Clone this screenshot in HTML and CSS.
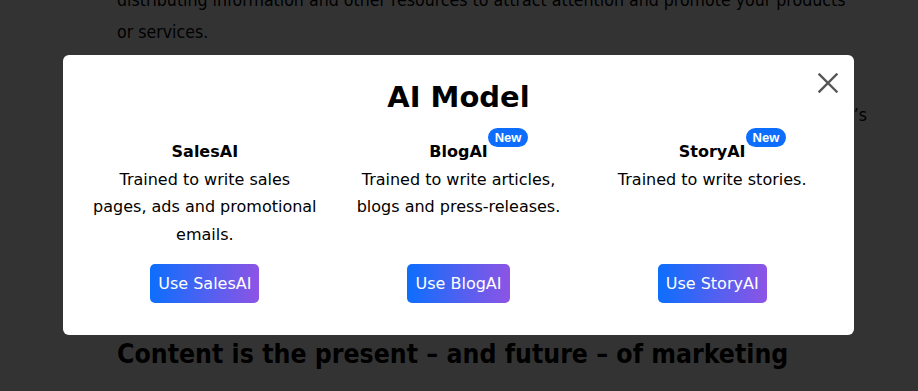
FILE: index.html
```html
<!DOCTYPE html>
<html lang="en">
<head>
<meta charset="utf-8">
<title>AI Model</title>
<link rel="stylesheet" href="styles.css">
</head>
<body>
<main class="article">
  <p class="para">distributing information and other resources to attract attention and promote your products<br>or services.</p>
  <p class="para">
    <span class="line">Good content helps brands build trust, grow an audience and generate leads.</span>
    <span class="line line-full">It is about delivering value at every stage of the buyer’s journey, and it shapes the company’s</span>
  </p>
  <p class="para">It answers real questions, educates prospects and keeps customers engaged<br>long after the first purchase. Consistent publishing builds authority over<br>time, improves search visibility and gives every channel something worth<br>sharing. That is why so many teams now treat content as a core part of<br>their growth strategy rather than an afterthought.</p>
  <h2 class="article-heading">Content is the present – and future – of marketing</h2>
</main>

<div class="backdrop"></div>

<section class="modal" role="dialog" aria-labelledby="modal-title">
  <button class="close" aria-label="Close">
    <svg viewBox="0 0 20 20" width="20" height="20"><path d="M1.5 1.5 L18.5 18.5 M18.5 1.5 L1.5 18.5" stroke="#555" stroke-width="2.4" stroke-linecap="square" fill="none"/></svg>
  </button>
  <h1 class="modal-title" id="modal-title">AI Model</h1>
  <div class="models">
    <div class="model">
      <h3 class="model-name">SalesAI</h3>
      <p class="model-desc">Trained to write sales pages, ads and promotional emails.</p>
      <button class="btn">Use SalesAI</button>
    </div>
    <div class="model">
      <h3 class="model-name">BlogAI<span class="badge">New</span></h3>
      <p class="model-desc">Trained to write articles, blogs and press-releases.</p>
      <button class="btn">Use BlogAI</button>
    </div>
    <div class="model">
      <h3 class="model-name">StoryAI<span class="badge">New</span></h3>
      <p class="model-desc">Trained to write stories.</p>
      <button class="btn">Use StoryAI</button>
    </div>
  </div>
</section>
</body>
</html>
```

FILE: styles.css
```css
html, body {
  margin: 0;
  padding: 0;
  background: #ffffff;
  overflow: hidden;
}

body {
  width: 918px;
  height: 391px;
  color: #000;
  font-family: "DejaVu Sans Condensed", "DejaVu Sans", sans-serif;
}

.article {
  margin-top: -16px;
  padding-left: 117px;
  width: 750px;
}

.para {
  margin: 0 0 19px;
  font-size: 17.6px;
  line-height: 32px;
  white-space: nowrap;
}

.line {
  display: block;
}

.line-full {
  text-align: justify;
  text-align-last: justify;
  white-space: normal;
}

.article-heading {
  margin: 27px 0 0;
  font-size: 26.4px;
  line-height: 34px;
  font-weight: bold;
  white-space: nowrap;
}

.backdrop {
  position: fixed;
  inset: 0;
  background: rgba(0, 0, 0, 0.8);
}

.modal {
  position: fixed;
  left: 63px;
  top: 55px;
  width: 791px;
  height: 280px;
  box-sizing: border-box;
  padding: 25px 15px 32px;
  background: #fff;
  border-radius: 6px;
  display: flex;
  flex-direction: column;
  font-family: "DejaVu Sans", Verdana, sans-serif;
  color: #000;
}

.close {
  position: absolute;
  top: 18px;
  right: 16px;
  width: 20px;
  height: 20px;
  padding: 0;
  border: 0;
  background: none;
  display: block;
}

.close svg {
  display: block;
}

.modal-title {
  margin: 0 0 23px;
  text-align: center;
  font-size: 29px;
  line-height: 35px;
  font-weight: bold;
}

.models {
  flex: 1;
  display: grid;
  grid-template-columns: repeat(3, 1fr);
}

.model {
  display: flex;
  flex-direction: column;
  align-items: center;
  text-align: center;
  padding: 0 13px;
}

.model-name {
  position: relative;
  margin: 0;
  font-size: 16px;
  line-height: 27.5px;
  font-weight: bold;
}

.badge {
  position: absolute;
  left: 100%;
  top: -10.5px;
  padding: 3px 7px;
  border-radius: 10px;
  background: #0d6efd;
  color: #fff;
  font-family: "Liberation Sans", Arial, sans-serif;
  font-size: 13px;
  line-height: 13px;
  font-weight: bold;
  white-space: nowrap;
}

.model-desc {
  margin: 0 0 15.5px;
  font-size: 16px;
  line-height: 27.5px;
}

.btn {
  margin-top: auto;
  height: 39px;
  padding: 0 8px;
  border: 0;
  border-radius: 5px;
  background: linear-gradient(90deg, #0d6efd 0%, #8d54e5 100%);
  color: #fff;
  font-family: "DejaVu Sans", Verdana, sans-serif;
  font-size: 16px;
  line-height: 39px;
}
```
